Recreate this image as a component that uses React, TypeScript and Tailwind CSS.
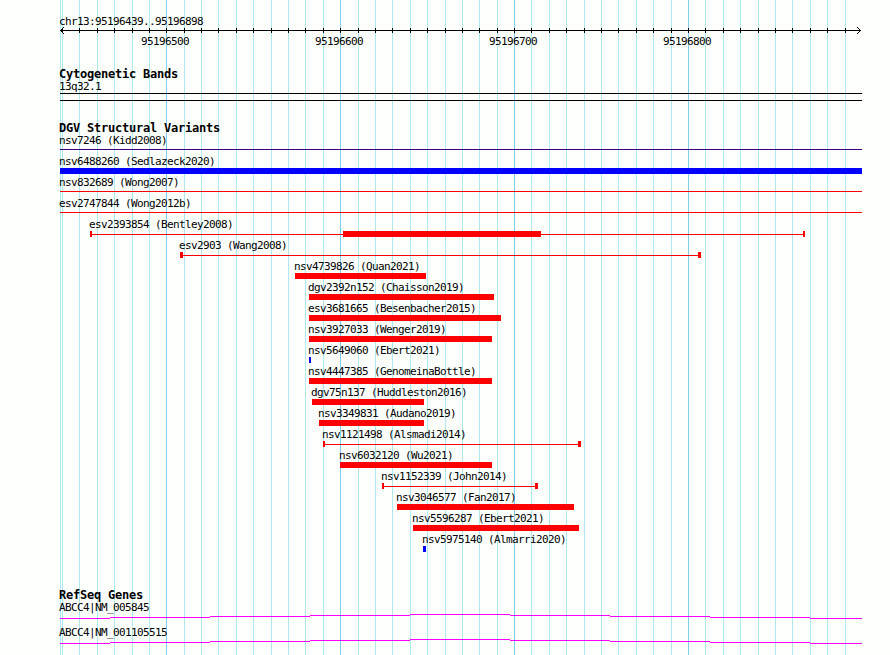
import React from "react";

// genome view: 95196439..95196898 drawn from x=60 to x=862
const VIEW_LEFT = 60;
const gridX = (k: number) => Math.round(166.3 + 17.39 * k);
const gridSteps = Array.from({ length: 46 }, (_, i) => i - 6);

const text = "font-['DejaVu_Sans_Mono',monospace] text-[11px] leading-[13px] tracking-[-0.62px] text-black whitespace-nowrap";
const heading = "font-['DejaVu_Sans_Mono',monospace] text-[12px] font-bold leading-[13px] tracking-[-0.22px] text-black whitespace-nowrap";

type Variant = {
  label: string;
  start: number;
  end: number;
  kind: "line" | "bar" | "capped";
  color?: string;
  thick?: [number, number];
  caps?: [number, number];
};

const variants: Variant[] = [
  { label: "nsv7246 (Kidd2008)", start: 60, end: 862, kind: "line", color: "#400080" },
  { label: "nsv6488260 (Sedlazeck2020)", start: 60, end: 862, kind: "bar", color: "#0000ff" },
  { label: "nsv832689 (Wong2007)", start: 60, end: 862, kind: "line" },
  { label: "esv2747844 (Wong2012b)", start: 60, end: 862, kind: "line" },
  { label: "esv2393854 (Bentley2008)", start: 90, end: 805, kind: "capped", thick: [343, 541], caps: [2, 2] },
  { label: "esv2903 (Wang2008)", start: 180, end: 701, kind: "capped", caps: [3, 3] },
  { label: "nsv4739826 (Quan2021)", start: 295, end: 426, kind: "bar" },
  { label: "dgv2392n152 (Chaisson2019)", start: 309, end: 494, kind: "bar" },
  { label: "esv3681665 (Besenbacher2015)", start: 309, end: 501, kind: "bar" },
  { label: "nsv3927033 (Wenger2019)", start: 309, end: 492, kind: "bar" },
  { label: "nsv5649060 (Ebert2021)", start: 309, end: 311, kind: "bar", color: "#0000ff" },
  { label: "nsv4447385 (GenomeinaBottle)", start: 309, end: 492, kind: "bar" },
  { label: "dgv75n137 (Huddleston2016)", start: 312, end: 424, kind: "bar" },
  { label: "nsv3349831 (Audano2019)", start: 319, end: 424, kind: "bar" },
  { label: "nsv1121498 (Alsmadi2014)", start: 323, end: 581, kind: "capped", caps: [2, 3] },
  { label: "nsv6032120 (Wu2021)", start: 340, end: 492, kind: "bar" },
  { label: "nsv1152339 (John2014)", start: 382, end: 538, kind: "capped", caps: [2, 3] },
  { label: "nsv3046577 (Fan2017)", start: 397, end: 574, kind: "bar" },
  { label: "nsv5596287 (Ebert2021)", start: 413, end: 579, kind: "bar" },
  { label: "nsv5975140 (Almarri2020)", start: 423, end: 426, kind: "bar", color: "#0000ff" },
];

// intron connector of the gene models, drawn as 1px steps
const geneSteps: [number, number, number][] = [
  [60, 110, 17], [110, 210, 16], [210, 310, 15], [310, 410, 14], [410, 510, 13],
  [510, 610, 14], [610, 710, 15], [710, 810, 16], [810, 862, 17],
];

function GridLines() {
  return (
    <svg width={890} height={655} className="absolute left-0 top-0" shapeRendering="crispEdges">
      <line x1={60.5} x2={60.5} y1={0} y2={655} stroke="#aee9ef" />
      {gridSteps.map((k) => (
        <line
          key={k}
          x1={gridX(k) + 0.5}
          x2={gridX(k) + 0.5}
          y1={0}
          y2={655}
          stroke={k % 10 === 0 ? "#80cdef" : "#aee9ef"}
        />
      ))}
    </svg>
  );
}

function Ruler() {
  return (
    <div className="flex h-[60px] flex-col">
      <p className={`${text} ml-[59px] mt-[15px]`}>chr13:95196439..95196898</p>
      <svg width={890} height={8} className="-mt-px" shapeRendering="crispEdges">
        <line x1={VIEW_LEFT} x2={861} y1={3.5} y2={3.5} stroke="#000" />
        {gridSteps.map((k) => (
          <line key={k} x1={gridX(k) + 0.5} x2={gridX(k) + 0.5} y1={1} y2={6} stroke="#000" />
        ))}
        <polyline points="64,0 60.5,3.5 64,7" fill="none" stroke="#000" shapeRendering="auto" />
        <polyline points="857,0 860.5,3.5 857,7" fill="none" stroke="#000" shapeRendering="auto" />
      </svg>
      <div className="flex gap-[126px] pl-[141px]">
        {["95196500", "95196600", "95196700", "95196800"].map((pos) => (
          <span key={pos} className={`${text} w-[48px]`}>
            {pos}
          </span>
        ))}
      </div>
    </div>
  );
}

function VariantRow({ v }: { v: Variant }) {
  const color = v.color ?? "#ff0000";
  const span = v.end - v.start;
  return (
    <div className="flex h-[21px] flex-col">
      <p className={text} style={{ marginLeft: v.start - 1 }}>
        {v.label}
      </p>
      {v.kind === "bar" && <div className="h-[6px]" style={{ marginLeft: v.start, width: span, backgroundColor: color }} />}
      {v.kind === "line" && (
        <div className="mt-[2px] h-px" style={{ marginLeft: v.start, width: span, backgroundColor: color }} />
      )}
      {v.kind === "capped" && (
        <div className="flex h-[6px] items-center" style={{ marginLeft: v.start, width: span }}>
          <div className="h-full" style={{ width: v.caps![0], backgroundColor: color }} />
          {v.thick ? (
            <>
              <div className="h-px" style={{ width: v.thick[0] - v.start - v.caps![0], backgroundColor: color }} />
              <div className="h-full" style={{ width: v.thick[1] - v.thick[0], backgroundColor: color }} />
              <div className="h-px flex-1" style={{ backgroundColor: color }} />
            </>
          ) : (
            <div className="h-px flex-1" style={{ backgroundColor: color }} />
          )}
          <div className="h-full" style={{ width: v.caps![1], backgroundColor: color }} />
        </div>
      )}
    </div>
  );
}

function GeneRow({ label }: { label: string }) {
  return (
    <div className="flex h-[25px] flex-col">
      <p className={`${text} ml-[59px]`}>{label}</p>
      <svg width={890} height={6} shapeRendering="crispEdges">
        {geneSteps.map(([a, b, y]) => (
          <line key={a} x1={a} x2={b} y1={y - 13 + 0.5} y2={y - 13 + 0.5} stroke="#ff00ff" />
        ))}
      </svg>
    </div>
  );
}

export default function App() {
  return (
    <div className="relative h-[655px] w-[890px] overflow-hidden bg-[#fdfffd]">
      <GridLines />
      <div className="relative flex flex-col">
        <Ruler />

        <section className="flex flex-col">
          <h2 className={`${heading} ml-[59px] mt-[8px]`}>Cytogenetic Bands</h2>
          <p className={`${text} ml-[59px] -mt-px`}>13q32.1</p>
          <div className="ml-[60px] h-[8px] w-[802px] border-y border-black" />
        </section>

        <section className="flex flex-col">
          <h2 className={`${heading} ml-[59px] mt-[21px]`}>DGV Structural Variants</h2>
          <div className="-mt-px flex flex-col">
            {variants.map((v) => (
              <VariantRow key={v.label} v={v} />
            ))}
          </div>
        </section>

        <section className="flex flex-col">
          <h2 className={`${heading} ml-[59px] mt-[35px]`}>RefSeq Genes</h2>
          <div className="-mt-px flex flex-col">
            <GeneRow label="ABCC4|NM_005845" />
            <GeneRow label="ABCC4|NM_001105515" />
          </div>
        </section>
      </div>
    </div>
  );
}
